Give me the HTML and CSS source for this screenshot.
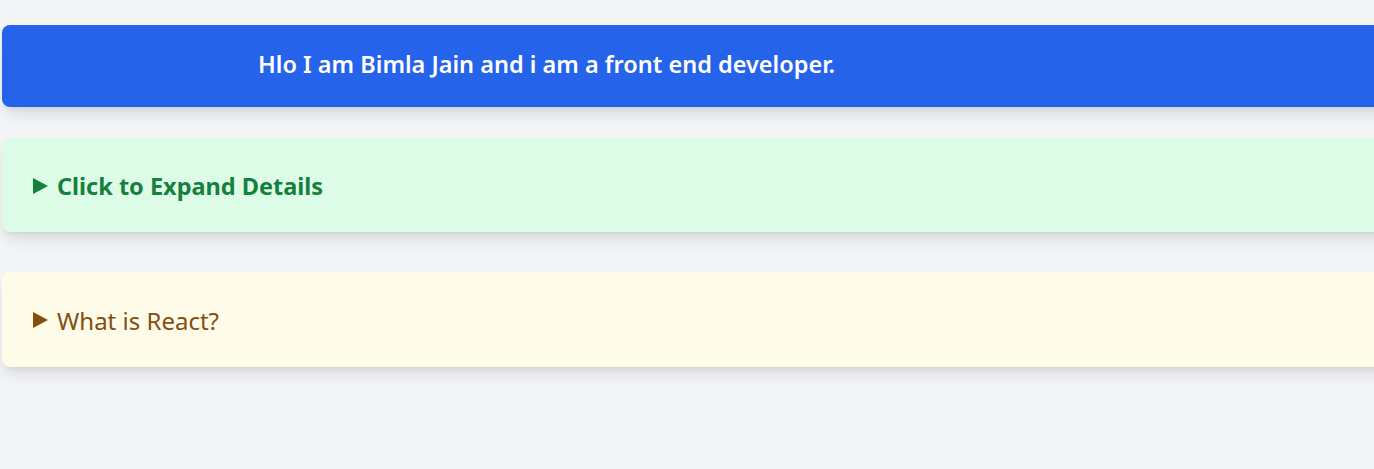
FILE: index.html
```html
<!DOCTYPE html>
<html lang="en">
<head>
<meta charset="utf-8">
<title>Profile</title>
<link rel="stylesheet" href="styles.css">
</head>
<body>
<main class="page">
  <header class="banner">
    <h1 class="banner-text">Hlo I am Bimla Jain and i am a front end developer.</h1>
  </header>
  <details class="panel panel-green">
    <summary class="panel-summary bold">Click to Expand Details</summary>
    <p>Details content.</p>
  </details>
  <details class="panel panel-yellow">
    <summary class="panel-summary">What is React?</summary>
    <p>React is a JavaScript library for building user interfaces.</p>
  </details>
</main>
</body>
</html>
```

FILE: styles.css
```css
html {
  overflow: hidden;
  background: #f3f4f6;
}
body {
  margin: 0;
  padding: 0;
  background: #f3f4f6;
  font-family: "Noto Sans", "Open Sans", sans-serif;
}
.page {
  display: flex;
  flex-direction: column;
  padding: 25px 0 40px 2px;
  width: 1420px;
}
.banner {
  background: #2563eb;
  border-radius: 8px;
  height: 82px;
  box-sizing: border-box;
  display: flex;
  align-items: center;
  padding-left: 256px;
  padding-bottom: 5px;
  box-shadow: 0 10px 15px -3px rgba(0,0,0,0.1), 0 4px 6px -4px rgba(0,0,0,0.1);
}
.banner-text {
  margin: 0;
  color: #ffffff;
  font-size: 23.5px;
  font-weight: 600;
}
.panel {
  border-radius: 8px;
  box-shadow: 0 10px 15px -3px rgba(0,0,0,0.1), 0 4px 6px -4px rgba(0,0,0,0.1);
}
.panel-green {
  margin-top: 31px;
  background: #dcfce7;
  color: #15803d;
  height: 94px;
}
.panel-yellow {
  margin-top: 40px;
  background: #fefce8;
  color: #854d0e;
  height: 95px;
}
.panel-summary {
  list-style: none;
  display: flex;
  align-items: center;
  height: 96px;
  padding-left: 31px;
  font-size: 24px;
  cursor: pointer;
}
.panel-summary::-webkit-details-marker {
  display: none;
}
.panel-summary::before {
  content: "";
  flex: none;
  width: 0;
  height: 0;
  border-top: 8px solid transparent;
  border-bottom: 8px solid transparent;
  border-left: 15px solid currentColor;
  margin-right: 9px;
}
.bold {
  font-weight: 700;
  font-size: 23.5px;
}
```
